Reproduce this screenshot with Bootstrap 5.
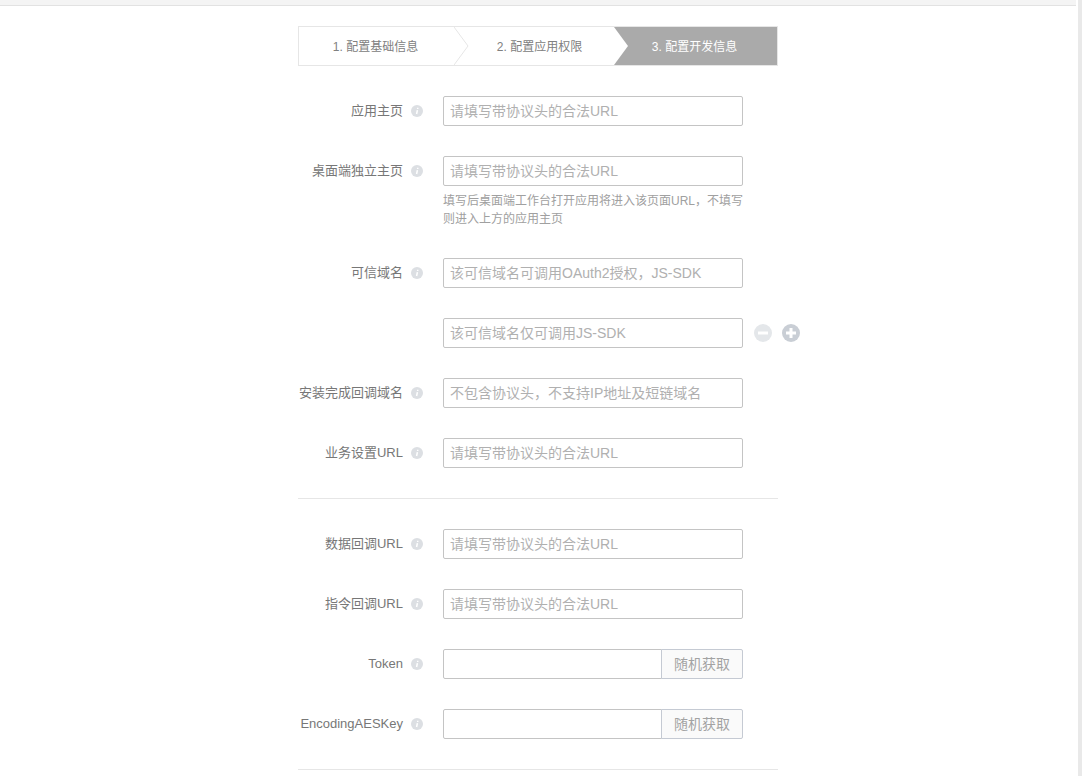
<!doctype html>
<html lang="zh">
<head>
<meta charset="utf-8">
<title>配置开发信息</title>
<link href="https://cdn.jsdelivr.net/npm/bootstrap@5.3.0/dist/css/bootstrap.min.css" rel="stylesheet">
<style>
html,body{height:776px;overflow:hidden;background:#fff}
body{font-family:"Liberation Sans","Noto Sans CJK SC",sans-serif;color:#777}
.shell{height:776px}
.main-pane{padding-right:2px;min-width:0}
.side-band{width:4px;background:#e9e9e9}
.top-strip{height:6px;background:#f4f4f4;border-bottom:1px solid #e2e2e2}
.form-wrap{width:480px;padding-top:20px}
.wizard{height:40px;border:1px solid #e6e6e6;margin-bottom:30px;font-size:12px;color:#808080}
.wstep{position:relative;height:38px;line-height:40px;text-align:center}
.wstep-a{width:155px;padding-right:2px}
.wstep-b{width:160px;padding-left:11px}
.wstep-c{width:163px;background:#aaa;color:#fff;padding-right:2px}
.chev{position:absolute;left:100%;top:0;z-index:2;display:block}
.frow{margin-bottom:30px}
.flabel{width:105px;flex:none;text-align:right;font-size:13px;line-height:29px;white-space:nowrap;color:#777}
.finfo{width:12px;height:12px;margin:9px 20px 0 8px;flex:none;display:block}
.fbody{width:300px;flex:none}
.fbody .form-control{height:30px;min-height:30px;padding:0 6px;font-size:14px;line-height:28px;border:1px solid #c4c4c4;border-radius:2px;color:#555;box-shadow:none}
.fbody .form-control::placeholder{color:#b0b0b0;opacity:1}
.fbody .rnd-btn{width:82px;height:30px;padding:0;font-size:14px;color:#a3a3a3;background:#fafafa;border:1px solid #c5cad3;border-radius:0 2px 2px 0;margin-left:-1px}
.fhint{font-size:12px;line-height:18px;color:#a0a0a0;margin-top:6px;white-space:nowrap}
.fops{gap:10px;margin-left:11px;height:30px}
.fops svg{display:block}
.fsep{border:0;border-top:1px solid #e6e6e6;margin:0 0 30px;opacity:1}
</style>
</head>
<body class="m-0">
<div class="shell d-flex">
  <div class="main-pane flex-grow-1">
    <div class="top-strip"></div>
    <div class="form-wrap mx-auto">
      <div class="wizard d-flex">
        <div class="wstep wstep-a">1. 配置基础信息
          <svg class="chev" width="15" height="38" viewBox="0 0 15 38"><path d="M0 0L14 19L0 38" fill="#fff" stroke="#e6e6e6"/></svg>
        </div>
        <div class="wstep wstep-b">2. 配置应用权限
          <svg class="chev" width="15" height="38" viewBox="0 0 15 38"><path d="M0 0L14 19L0 38Z" fill="#fff"/></svg>
        </div>
        <div class="wstep wstep-c">3. 配置开发信息</div>
      </div>

      <div class="frow d-flex">
        <div class="flabel">应用主页</div>
        <svg class="finfo" viewBox="0 0 12 12"><circle cx="6" cy="6" r="6" fill="#dcdfe3"/><path d="M6.4 5.2L5.6 9M6.7 2.8v1.2" stroke="#fff" stroke-width="1.5" fill="none"/></svg>
        <div class="fbody"><input class="form-control" placeholder="请填写带协议头的合法URL"></div>
      </div>

      <div class="frow d-flex">
        <div class="flabel">桌面端独立主页</div>
        <svg class="finfo" viewBox="0 0 12 12"><circle cx="6" cy="6" r="6" fill="#dcdfe3"/><path d="M6.4 5.2L5.6 9M6.7 2.8v1.2" stroke="#fff" stroke-width="1.5" fill="none"/></svg>
        <div class="fbody">
          <input class="form-control" placeholder="请填写带协议头的合法URL">
          <div class="fhint">填写后桌面端工作台打开应用将进入该页面URL，不填写<br>则进入上方的应用主页</div>
        </div>
      </div>

      <div class="frow d-flex">
        <div class="flabel">可信域名</div>
        <svg class="finfo" viewBox="0 0 12 12"><circle cx="6" cy="6" r="6" fill="#dcdfe3"/><path d="M6.4 5.2L5.6 9M6.7 2.8v1.2" stroke="#fff" stroke-width="1.5" fill="none"/></svg>
        <div class="fbody"><input class="form-control" placeholder="该可信域名可调用OAuth2授权，JS-SDK"></div>
      </div>

      <div class="frow d-flex">
        <div class="flabel"></div>
        <div class="finfo"></div>
        <div class="fbody"><input class="form-control" placeholder="该可信域名仅可调用JS-SDK"></div>
        <div class="fops d-flex align-items-center flex-shrink-0">
          <svg width="18" height="18" viewBox="0 0 18 18"><circle cx="9" cy="9" r="9" fill="#e4e7ea"/><path d="M4 9h10" stroke="#fff" stroke-width="3"/></svg>
          <svg width="18" height="18" viewBox="0 0 18 18"><circle cx="9" cy="9" r="9" fill="#c9ced5"/><path d="M4 9h10M9 4v10" stroke="#fff" stroke-width="3"/></svg>
        </div>
      </div>

      <div class="frow d-flex">
        <div class="flabel">安装完成回调域名</div>
        <svg class="finfo" viewBox="0 0 12 12"><circle cx="6" cy="6" r="6" fill="#dcdfe3"/><path d="M6.4 5.2L5.6 9M6.7 2.8v1.2" stroke="#fff" stroke-width="1.5" fill="none"/></svg>
        <div class="fbody"><input class="form-control" placeholder="不包含协议头，不支持IP地址及短链域名"></div>
      </div>

      <div class="frow d-flex">
        <div class="flabel">业务设置URL</div>
        <svg class="finfo" viewBox="0 0 12 12"><circle cx="6" cy="6" r="6" fill="#dcdfe3"/><path d="M6.4 5.2L5.6 9M6.7 2.8v1.2" stroke="#fff" stroke-width="1.5" fill="none"/></svg>
        <div class="fbody"><input class="form-control" placeholder="请填写带协议头的合法URL"></div>
      </div>

      <hr class="fsep">

      <div class="frow d-flex">
        <div class="flabel">数据回调URL</div>
        <svg class="finfo" viewBox="0 0 12 12"><circle cx="6" cy="6" r="6" fill="#dcdfe3"/><path d="M6.4 5.2L5.6 9M6.7 2.8v1.2" stroke="#fff" stroke-width="1.5" fill="none"/></svg>
        <div class="fbody"><input class="form-control" placeholder="请填写带协议头的合法URL"></div>
      </div>

      <div class="frow d-flex">
        <div class="flabel">指令回调URL</div>
        <svg class="finfo" viewBox="0 0 12 12"><circle cx="6" cy="6" r="6" fill="#dcdfe3"/><path d="M6.4 5.2L5.6 9M6.7 2.8v1.2" stroke="#fff" stroke-width="1.5" fill="none"/></svg>
        <div class="fbody"><input class="form-control" placeholder="请填写带协议头的合法URL"></div>
      </div>

      <div class="frow d-flex">
        <div class="flabel">Token</div>
        <svg class="finfo" viewBox="0 0 12 12"><circle cx="6" cy="6" r="6" fill="#dcdfe3"/><path d="M6.4 5.2L5.6 9M6.7 2.8v1.2" stroke="#fff" stroke-width="1.5" fill="none"/></svg>
        <div class="fbody"><div class="input-group flex-nowrap"><input class="form-control" aria-label="Token"><button class="btn rnd-btn" type="button">随机获取</button></div></div>
      </div>

      <div class="frow d-flex">
        <div class="flabel">EncodingAESKey</div>
        <svg class="finfo" viewBox="0 0 12 12"><circle cx="6" cy="6" r="6" fill="#dcdfe3"/><path d="M6.4 5.2L5.6 9M6.7 2.8v1.2" stroke="#fff" stroke-width="1.5" fill="none"/></svg>
        <div class="fbody"><div class="input-group flex-nowrap"><input class="form-control" aria-label="EncodingAESKey"><button class="btn rnd-btn" type="button">随机获取</button></div></div>
      </div>

      <hr class="fsep">
    </div>
  </div>
  <div class="side-band flex-shrink-0"></div>
</div>
<script src="https://cdn.jsdelivr.net/npm/bootstrap@5.3.0/dist/js/bootstrap.bundle.min.js"></script>
</body>
</html>
